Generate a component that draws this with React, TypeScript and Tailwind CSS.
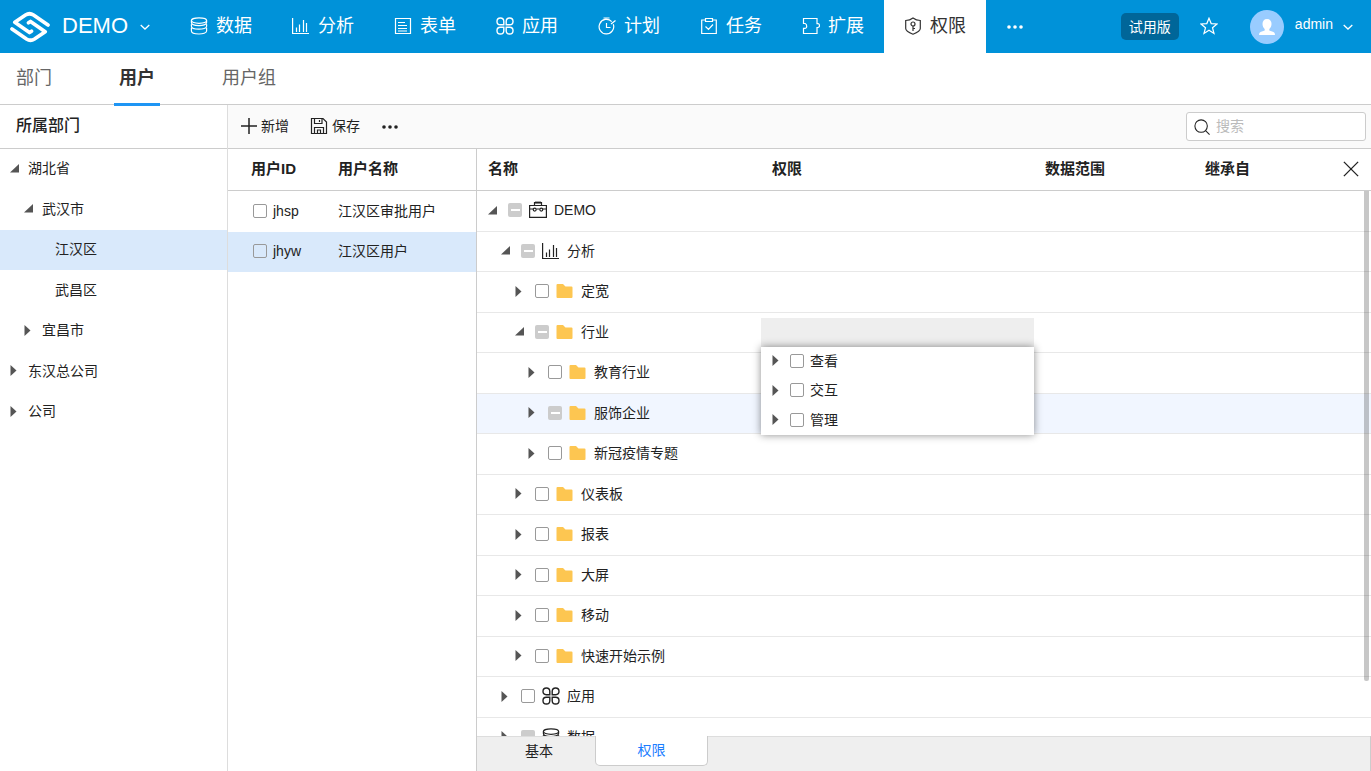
import type { ReactNode } from 'react';
import clsx from 'clsx';

type IconProps = {
  className?: string;
};

type SvgProps = IconProps & {
  children: ReactNode;
};

const Svg = ({ className = 'w-[18px] h-[18px]', children }: SvgProps) => (
  <svg
    viewBox="0 0 18 18"
    fill="none"
    stroke="currentColor"
    strokeWidth="1.2"
    className={clsx('shrink-0', className)}
    aria-hidden="true"
  >
    {children}
  </svg>
);

const DataIcon = ({ className }: IconProps) => (
  <Svg className={className}>
    <ellipse cx="9" cy="3.6" rx="7.6" ry="2.7" />
    <path d="M1.4 3.600v2c0 4 15.200 4 15.200 0v-2M1.400 7.200v2c0 4 15.200 4 15.200 0v-2M1.400 10.800v3.200c0 4 15.200 4 15.200 0v-3.200" />
  </Svg>
);

const ChartIcon = ({ className }: IconProps) => (
  <Svg className={className}>
    <path d="M.6 1v15.500H17M4.500 15V10.500M7.500 15V7.500M11.500 15V3M14.500 15V6" />
  </Svg>
);

const FormIcon = () => (
  <Svg>
    <path d="M1.500 1.500h15v15h-15zM4 5.500h7M4 8.500h9M4 11.500h9M4 14h9" />
  </Svg>
);

const AppIcon = ({ className }: IconProps) => (
  <Svg className={className}>
    <path
      strokeWidth="1.4"
      d="M7.800 7.800H4.300a3.400 3.400 0 1 1 3.500-3.500zM10.200 7.800V4.300a3.400 3.400 0 1 1 3.500 3.500zM7.800 10.200v3.500a3.400 3.400 0 1 1-3.500-3.500zM10.200 10.200h3.500a3.400 3.400 0 1 1-3.500 3.500z"
    />
  </Svg>
);

const PlanIcon = () => (
  <Svg>
    <path d="M15.300 7.200a7.300 7.300 0 1 1-1.600-2.600M5.500 1h6M8.500 6v4.500h4M13 7l4.500-3.500" />
  </Svg>
);

const TaskIcon = () => (
  <Svg>
    <path d="M5.500 3H1.700v13.500h14.600V3h-3.800M5.500 1.500h7v3h-7zM5.500 9.500l3 3 4.500-5" />
  </Svg>
);

const ExtendIcon = () => (
  <Svg>
    <path d="M1.500 6.500v-5h13.500v5.200h1q1.500.1 1.500 1.900t-1.500 1.900h-1v6H1.500v-5.200h1.700q1.500 0 1.500-2.100T3.200 6.500z" />
  </Svg>
);

const ShieldIcon = () => (
  <Svg>
    <path d="M9 1c2.500 2 5 2.500 7.300 2.500v8c0 2.500-3 4-7.300 5.700-4.300-1.700-7.300-3.200-7.300-5.700v-8C4 3.500 6.500 3 9 1z" />
    <path d="M9 9v5M9 11.500h2" />
    <circle cx="9" cy="7" r="2" />
  </Svg>
);

const DotsIcon = () => (
  <Svg>
    <g fill="currentColor" stroke="none">
      <circle cx="3" cy="9" r="1.800" />
      <circle cx="9" cy="9" r="1.800" />
      <circle cx="15" cy="9" r="1.800" />
    </g>
  </Svg>
);

const ToolboxIcon = () => (
  <Svg>
    <path d="M.6 4.500h16.800v11.900H.6zM5.500 4V1.700h7V4M.6 8h3.700M7.500 8h3M13.700 8h3.700" />
    <path strokeWidth="1.800" d="M6 1.500h6" />
    <circle cx="5.700" cy="8.600" r="1.500" />
    <circle cx="12.300" cy="8.600" r="1.500" />
  </Svg>
);

const FolderIcon = () => (
  <Svg>
    <path
      fill="#fdc651"
      stroke="none"
      d="M.5 3q0-1 1-1h5.500l2.500 2.500h6q1 0 1 1V15q0 1-1 1h-14q-1 0-1-1z"
    />
  </Svg>
);

const PlusIcon = () => (
  <Svg>
    <path strokeWidth="1.500" d="M9 1v16M1 9h16" />
  </Svg>
);

const SaveIcon = () => (
  <Svg>
    <path d="M1.500 1.500h11.500l3.500 3.500v11.500h-15zM4.500 1.500v5h7.500v-5M9.500 3v2M4.500 16.500v-6h9v6M7.500 16.500v-3.500h3v3.500" />
  </Svg>
);

const SearchIcon = () => (
  <Svg className="w-4 h-4">
    <circle cx="8" cy="8" r="7" />
    <path d="m13 13 4.500 4.500" />
  </Svg>
);

const CloseIcon = () => (
  <Svg className="w-4 h-4">
    <path strokeWidth="1.500" d="m1 1 16 16M17 1 1 17" />
  </Svg>
);

const StarIcon = () => (
  <Svg>
    <path d="m9 1.200 2.200 5.400 5.800.4-4.500 3.700 1.500 5.800L9 13.300l-5 3.200 1.500-5.800L1 7l5.800-.4z" />
  </Svg>
);

const ChevronIcon = () => (
  <svg viewBox="0 0 10 10" fill="none" stroke="currentColor" strokeWidth="1.300" className="w-[10px] h-[10px] shrink-0">
    <path d="M.7 3 5 7l4.300-4" />
  </svg>
);

const Logo = () => (
  <svg
    viewBox="0 0 40 32"
    fill="none"
    stroke="currentColor"
    strokeWidth="3.700"
    strokeLinecap="round"
    strokeLinejoin="round"
    className="w-10 h-8 shrink-0"
  >
    <path d="M38 14 23.500 4Q19.500 1.500 15.500 4L4.800 11.300 19.500 21.500 21.500 20.200" />
    <path d="M2 18 16.500 28Q20.500 30.500 24.500 28L35.200 20.700 20.500 10.500 18.500 11.800" />
  </svg>
);

// expanded nodes get the corner triangle, collapsed ones point right
const Arrow = ({ open }: { open?: boolean }) => (
  <svg viewBox="0 0 9 11" fill="#555" className="w-[9px] h-[11px] shrink-0" aria-hidden="true">
    <path d={open ? 'M9 1v8.500H0z' : 'M.5 0 6.500 5.500l-6 5.500z'} />
  </svg>
);

type CheckboxProps = {
  label: string;
  partial?: boolean;
};

const Checkbox = ({ label, partial }: CheckboxProps) => (
  <input
    type="checkbox"
    aria-label={label}
    className={clsx(
      'appearance-none w-[14px] h-[14px] shrink-0 rounded-[2px] flex items-center justify-center',
      partial
        ? "bg-[#ccc] before:content-[''] before:w-[9px] before:h-[2px] before:bg-white"
        : 'border border-[#999]',
    )}
  />
);

const navItems = [
  { label: '数据', Icon: DataIcon },
  { label: '分析', Icon: ChartIcon },
  { label: '表单', Icon: FormIcon },
  { label: '应用', Icon: AppIcon },
  { label: '计划', Icon: PlanIcon },
  { label: '任务', Icon: TaskIcon },
  { label: '扩展', Icon: ExtendIcon },
  { label: '权限', Icon: ShieldIcon, active: true },
];

const departments = [
  { label: '湖北省', level: 0, open: true },
  { label: '武汉市', level: 1, open: true },
  { label: '江汉区', level: 2, leaf: true, active: true },
  { label: '武昌区', level: 2, leaf: true },
  { label: '宜昌市', level: 1 },
  { label: '东汉总公司', level: 0 },
  { label: '公司', level: 0 },
];

const users = [
  { id: 'jhsp', name: '江汉区审批用户' },
  { id: 'jhyw', name: '江汉区用户', active: true },
];

type Resource = {
  label: string;
  level: number;
  open?: boolean;
  partial?: boolean;
  active?: boolean;
  editing?: boolean;
  Icon?: (props: IconProps) => ReactNode;
};

const resources: Resource[] = [
  { label: 'DEMO', level: 0, open: true, partial: true, Icon: ToolboxIcon },
  { label: '分析', level: 1, open: true, partial: true, Icon: ChartIcon },
  { label: '定宽', level: 2 },
  { label: '行业', level: 2, open: true, partial: true, editing: true },
  { label: '教育行业', level: 3 },
  { label: '服饰企业', level: 3, partial: true, active: true },
  { label: '新冠疫情专题', level: 3 },
  { label: '仪表板', level: 2 },
  { label: '报表', level: 2 },
  { label: '大屏', level: 2 },
  { label: '移动', level: 2 },
  { label: '快速开始示例', level: 2 },
  { label: '应用', level: 1, Icon: AppIcon },
  { label: '数据', level: 1, partial: true, Icon: DataIcon },
];

const indents = ['pl-[11px]', 'pl-[24px]', 'pl-[38px]', 'pl-[51px]'];
const deptIndents = ['pl-[10px]', 'pl-[24px]', 'pl-[37px]'];

const Header = () => (
  <header className="flex h-[53px] shrink-0 bg-[#0092d9] text-white">
    <button className="flex items-center w-[170px] pl-[10px]">
      <Logo />
      <span className="mx-3 pb-[2px] text-[22px] leading-7">DEMO</span>
      <ChevronIcon />
    </button>
    <nav className="flex">
      {navItems.map(({ label, Icon, active }) => (
        <a
          key={label}
          href="#"
          className={clsx(
            'flex items-center gap-2 px-5 pb-[2px] text-lg whitespace-nowrap',
            active && 'bg-white text-[#333]',
          )}
        >
          <Icon />
          {label}
        </a>
      ))}
      <button aria-label="更多" className="flex items-center px-5">
        <DotsIcon />
      </button>
    </nav>
    <div className="flex items-center ml-auto pr-[18px]">
      <button className="h-[27px] px-2 rounded-[5px] bg-[#069] text-sm">试用版</button>
      <button aria-label="收藏" className="mx-[21px] pb-[2px]">
        <StarIcon />
      </button>
      <svg viewBox="0 0 34 34" className="w-[34px] h-[34px] ml-[11px] shrink-0" aria-hidden="true">
        <circle cx="17" cy="17" r="17" fill="#9cf" />
        <path
          fill="#fff"
          d="M17 9c3 0 4.500 2 4.500 5 0 2.300-1 4-2.200 5v1.500l4.200 1.500q1.500.6 1.500 3H9q0-2.400 1.500-3l4.200-1.500V19c-1.200-1-2.200-2.700-2.200-5 0-3 1.500-5 4.500-5z"
        />
      </svg>
      <button className="flex items-center gap-[10px] ml-[11px] text-sm">
        <span className="pb-[6px]">admin</span>
        <ChevronIcon />
      </button>
    </div>
  </header>
);

const SubNav = () => (
  <nav className="flex gap-[57px] h-[52px] shrink-0 pl-[11px] border-b border-[#ccc] text-lg text-[#666]">
    {['部门', '用户', '用户组'].map((label) => {
      const active = label === '用户';
      return (
        <a
          key={label}
          href="#"
          className={clsx('relative flex items-center px-[5px] pb-[2px]', active && 'font-bold text-[#333]')}
        >
          {label}
          {active && <span className="absolute inset-x-0 -bottom-[2px] h-[3px] bg-[#1e95f4]" />}
        </a>
      );
    })}
  </nav>
);

const Departments = () => (
  <aside className="w-[228px] shrink-0 border-r border-[#ddd]">
    <h2 className="flex items-center h-11 pl-4 pb-[2px] border-b border-[#ccc] text-base font-medium">所属部门</h2>
    <ul>
      {departments.map((dept) => (
        <li
          key={dept.label}
          className={clsx(
            'flex items-center gap-[9px] odd:h-[41px] even:h-[40px] pb-[2px] border-b border-transparent bg-clip-padding',
            deptIndents[dept.level],
            dept.active && 'bg-[#d9e9fb]',
          )}
        >
          {dept.leaf ? <span className="w-[9px]" /> : <Arrow open={dept.open} />}
          {dept.label}
        </li>
      ))}
    </ul>
  </aside>
);

const Toolbar = () => (
  <div className="flex items-center h-11 shrink-0 pl-3 pr-[5px] border-b border-[#ccc] bg-[#fafafa]">
    <button className="flex items-center gap-[3px] pb-[2px]">
      <PlusIcon />
      新增
    </button>
    <button className="flex items-center gap-1 ml-[21px] pb-[2px]">
      <SaveIcon />
      保存
    </button>
    <button aria-label="更多操作" className="ml-[21px]">
      <DotsIcon />
    </button>
    <label className="flex items-center gap-[6px] w-[180px] h-[29px] ml-auto px-[7px] border border-[#ccc] rounded-[3px] bg-white">
      <SearchIcon />
      <input
        type="text"
        aria-label="搜索"
        placeholder="搜索"
        className="w-full pb-[2px] outline-none placeholder:text-[#bbb]"
      />
    </label>
  </div>
);

const Users = () => (
  <section className="w-[249px] shrink-0 border-r border-[#ccc]">
    <table className="w-full table-fixed border-separate border-spacing-0 text-left">
      <thead className="text-[15px]">
        <tr>
          <th className="w-[110px] h-[42px] pl-[23px] pb-[2px] border-b border-[#ccc] font-bold">用户ID</th>
          <th className="pb-[2px] border-b border-[#ccc] font-bold">用户名称</th>
        </tr>
      </thead>
      <tbody>
        {users.map((user) => (
          <tr key={user.id} className={clsx('group', user.active && 'bg-[#d9e9fb]')}>
            <td className="group-odd:h-[41px] group-even:h-[40px] pl-[25px] pb-[2px]">
              <label className="flex items-center gap-[6px]">
                <Checkbox label={user.id} />
                {user.id}
              </label>
            </td>
            <td className="pb-[2px]">{user.name}</td>
          </tr>
        ))}
      </tbody>
    </table>
  </section>
);

const PermissionEditor = () => (
  <div className="absolute inset-x-0 top-[5px] z-10">
    <div className="h-[29px] bg-[#eee]" />
    <ul className="bg-white shadow-[0_0_8px_rgba(0,0,0,0.45)]">
      {['查看', '交互', '管理'].map((label) => (
        <li key={label} className="flex items-center odd:h-[29px] even:h-[30px] pl-[11px] pb-[2px]">
          <Arrow />
          <label className="flex items-center gap-[6px] ml-[9px]">
            <Checkbox label={label} />
            {label}
          </label>
        </li>
      ))}
    </ul>
  </div>
);

const Permissions = () => (
  <section className="flex flex-col flex-1 min-w-0">
    <div className="relative flex-1 min-h-0 overflow-hidden">
      <table className="w-full table-fixed border-separate border-spacing-0 text-left">
        <thead className="text-[15px]">
          <tr>
            <th className="w-[284px] h-[42px] pl-[11px] pb-[2px] border-b border-[#ccc] font-bold">名称</th>
            <th className="w-[273px] pl-[11px] pb-[2px] border-b border-[#ccc] font-bold">权限</th>
            <th className="w-[160px] pl-[11px] pb-[2px] border-b border-[#ccc] font-bold">数据范围</th>
            <th className="pl-[11px] pr-3 border-b border-[#ccc] font-bold">
              <div className="flex items-center justify-between">
                <span className="pb-[2px]">继承自</span>
                <button aria-label="关闭">
                  <CloseIcon />
                </button>
              </div>
            </th>
          </tr>
        </thead>
        <tbody>
          {resources.map(({ label, level, open, partial, active, editing, Icon = FolderIcon }) => (
            <tr key={label + level} className={clsx('group', active && 'bg-[#f1f6ff]')}>
              <td
                className={clsx(
                  'group-odd:h-[41px] group-even:h-[40px] pb-[2px] border-b border-[#e8e8e8]',
                  indents[level],
                )}
              >
                <div className="flex items-center">
                  <Arrow open={open} />
                  <label className="flex items-center gap-[7px] ml-[11px]">
                    <Checkbox label={label} partial={partial} />
                    <Icon />
                    {label}
                  </label>
                </div>
              </td>
              <td className="relative border-b border-[#e8e8e8]">{editing && <PermissionEditor />}</td>
              <td className="border-b border-[#e8e8e8]" />
              <td className="border-b border-[#e8e8e8]" />
            </tr>
          ))}
        </tbody>
      </table>
      <div className="absolute right-[2px] top-[42px] w-[5px] h-[490px] rounded-b-[2px] bg-black/22" />
    </div>
    <div className="flex h-[35px] shrink-0 border-r border-[#ccc] bg-[#efefef]">
      <button className="w-[118px] h-[30px] pl-[6px] pb-[2px] border-t border-[#ddd]">基本</button>
      <button className="w-[113px] h-[30px] pb-[2px] border border-t-0 border-[#ccc] rounded-b-[5px] bg-white text-[#1a7dff]">
        权限
      </button>
      <div className="flex-1 border-t border-[#ddd]" />
    </div>
  </section>
);

const App = () => (
  <div className="flex flex-col h-screen overflow-hidden bg-white text-sm text-[#222] font-['Liberation_Sans','Noto_Sans_CJK_SC',sans-serif]">
    <Header />
    <SubNav />
    <main className="flex flex-1 min-h-0">
      <Departments />
      <div className="flex flex-col flex-1 min-w-0">
        <Toolbar />
        <div className="flex flex-1 min-h-0">
          <Users />
          <Permissions />
        </div>
      </div>
    </main>
  </div>
);

export default App;
